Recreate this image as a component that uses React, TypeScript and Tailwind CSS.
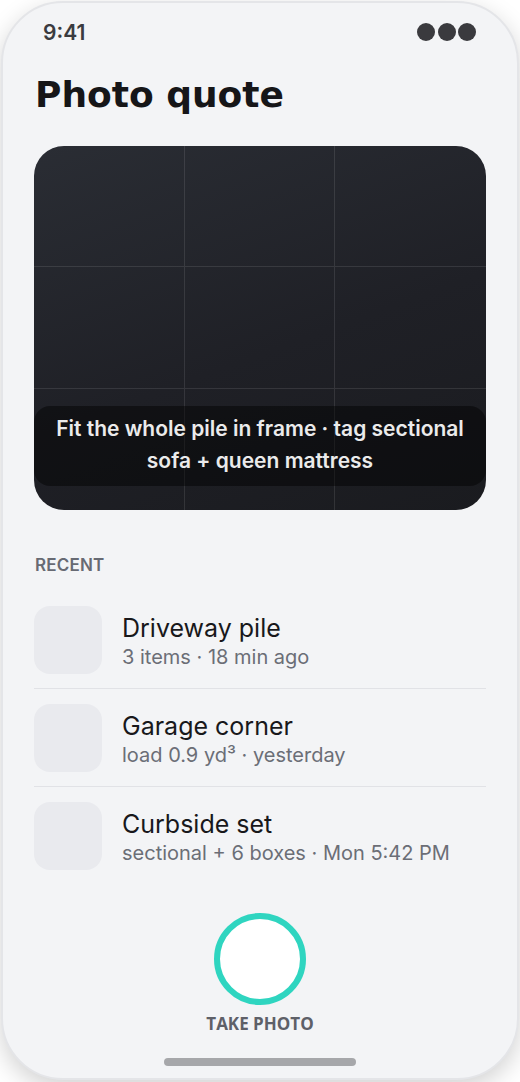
import React from "react";

const rows = [
  { title: "Driveway pile", sub: "3 items · 18 min ago" },
  { title: "Garage corner", sub: "load 0.9 yd³ · yesterday" },
  { title: "Curbside set", sub: "sectional + 6 boxes · Mon 5:42 PM" },
];

export default function App() {
  return (
    <div className="w-[520px] h-[1082px] bg-white flex justify-center pt-px overflow-hidden">
      <div className="w-[518px] h-[1079px] rounded-[62px] border-2 border-[#e4e5e8] bg-[#f3f4f6] shadow-[0_8px_24px_rgba(0,0,0,0.18)] overflow-hidden flex flex-col px-[31px] font-['Inter',sans-serif]">
        {/* status bar */}
        <div className="flex items-center justify-between pt-[16px] h-[42px] pl-[9px] pr-[10px]">
          <span className="text-[21px] font-semibold text-[#3a3b40] leading-none">9:41</span>
          <div className="flex gap-[2.5px]">
            <span className="w-[18px] h-[18px] rounded-full bg-[#3a3a3e]" />
            <span className="w-[18px] h-[18px] rounded-full bg-[#3a3a3e]" />
            <span className="w-[18px] h-[18px] rounded-full bg-[#3a3a3e]" />
          </div>
        </div>

        {/* title */}
        <h1 className="mt-[28px] pl-[1px] font-['DejaVu_Sans',sans-serif] font-bold text-[36px] leading-[44px] text-[#161618]">
          Photo quote
        </h1>

        {/* camera */}
        <div className="relative mt-[29px] h-[364px] rounded-[30px] overflow-hidden bg-[linear-gradient(160deg,#2a2d34_0%,#1f2026_55%,#1a1b1f_100%)] grid grid-cols-3 grid-rows-3">
          <div className="border-r border-b border-white/10" />
          <div className="border-r border-b border-white/10" />
          <div className="border-b border-white/10" />
          <div className="border-r border-b border-white/10" />
          <div className="border-r border-b border-white/10" />
          <div className="border-b border-white/10" />
          <div className="border-r border-white/10" />
          <div className="border-r border-white/10" />
          <div />
          <div className="absolute left-0 right-0 bottom-[24px] h-[80px] rounded-[16px] bg-black/45 flex items-center justify-center px-[20px]">
            <p className="text-center text-[21px] leading-[32px] font-semibold text-[#ebebeb] -translate-y-[1px]">
              Fit the whole pile in frame · tag sectional sofa + queen mattress
            </p>
          </div>
        </div>

        {/* recent */}
        <div className="mt-[45px] pl-[1px] text-[17px] font-semibold text-[#676a73] leading-[20px] tracking-[0.2px]">
          RECENT
        </div>
        <div className="mt-[16px] flex flex-col">
          {rows.map((r, i) => (
            <div
              key={r.title}
              className={
                "flex items-center gap-[20px] pt-[15px] pb-[14px] " +
                (i < rows.length - 1 ? "border-b-[1.5px] border-[#e1e2e6]" : "")
              }
            >
              <div className="w-[68px] h-[68px] rounded-[16px] bg-[#e9eaee] shrink-0" />
              <div className="flex flex-col pt-[4px]">
                <span className="text-[25px] leading-[31px] text-[#18181b]">{r.title}</span>
                <span className="text-[20px] leading-[27px] text-[#6b6e76]">{r.sub}</span>
              </div>
            </div>
          ))}
        </div>

        {/* shutter */}
        <div className="mt-auto flex flex-col items-center">
          <div className="w-[92px] h-[92px] rounded-full border-[6px] border-[#2fd5c0] bg-white" />
          <span className="mt-[8px] font-['Open_Sans',sans-serif] font-bold text-[17px] leading-[22px] text-[#5e6068]">
            TAKE PHOTO
          </span>
          <div className="mt-[23px] mb-[12px] w-[192px] h-[8px] rounded-full bg-[#a6a7aa]" />
        </div>
      </div>
    </div>
  );
}
